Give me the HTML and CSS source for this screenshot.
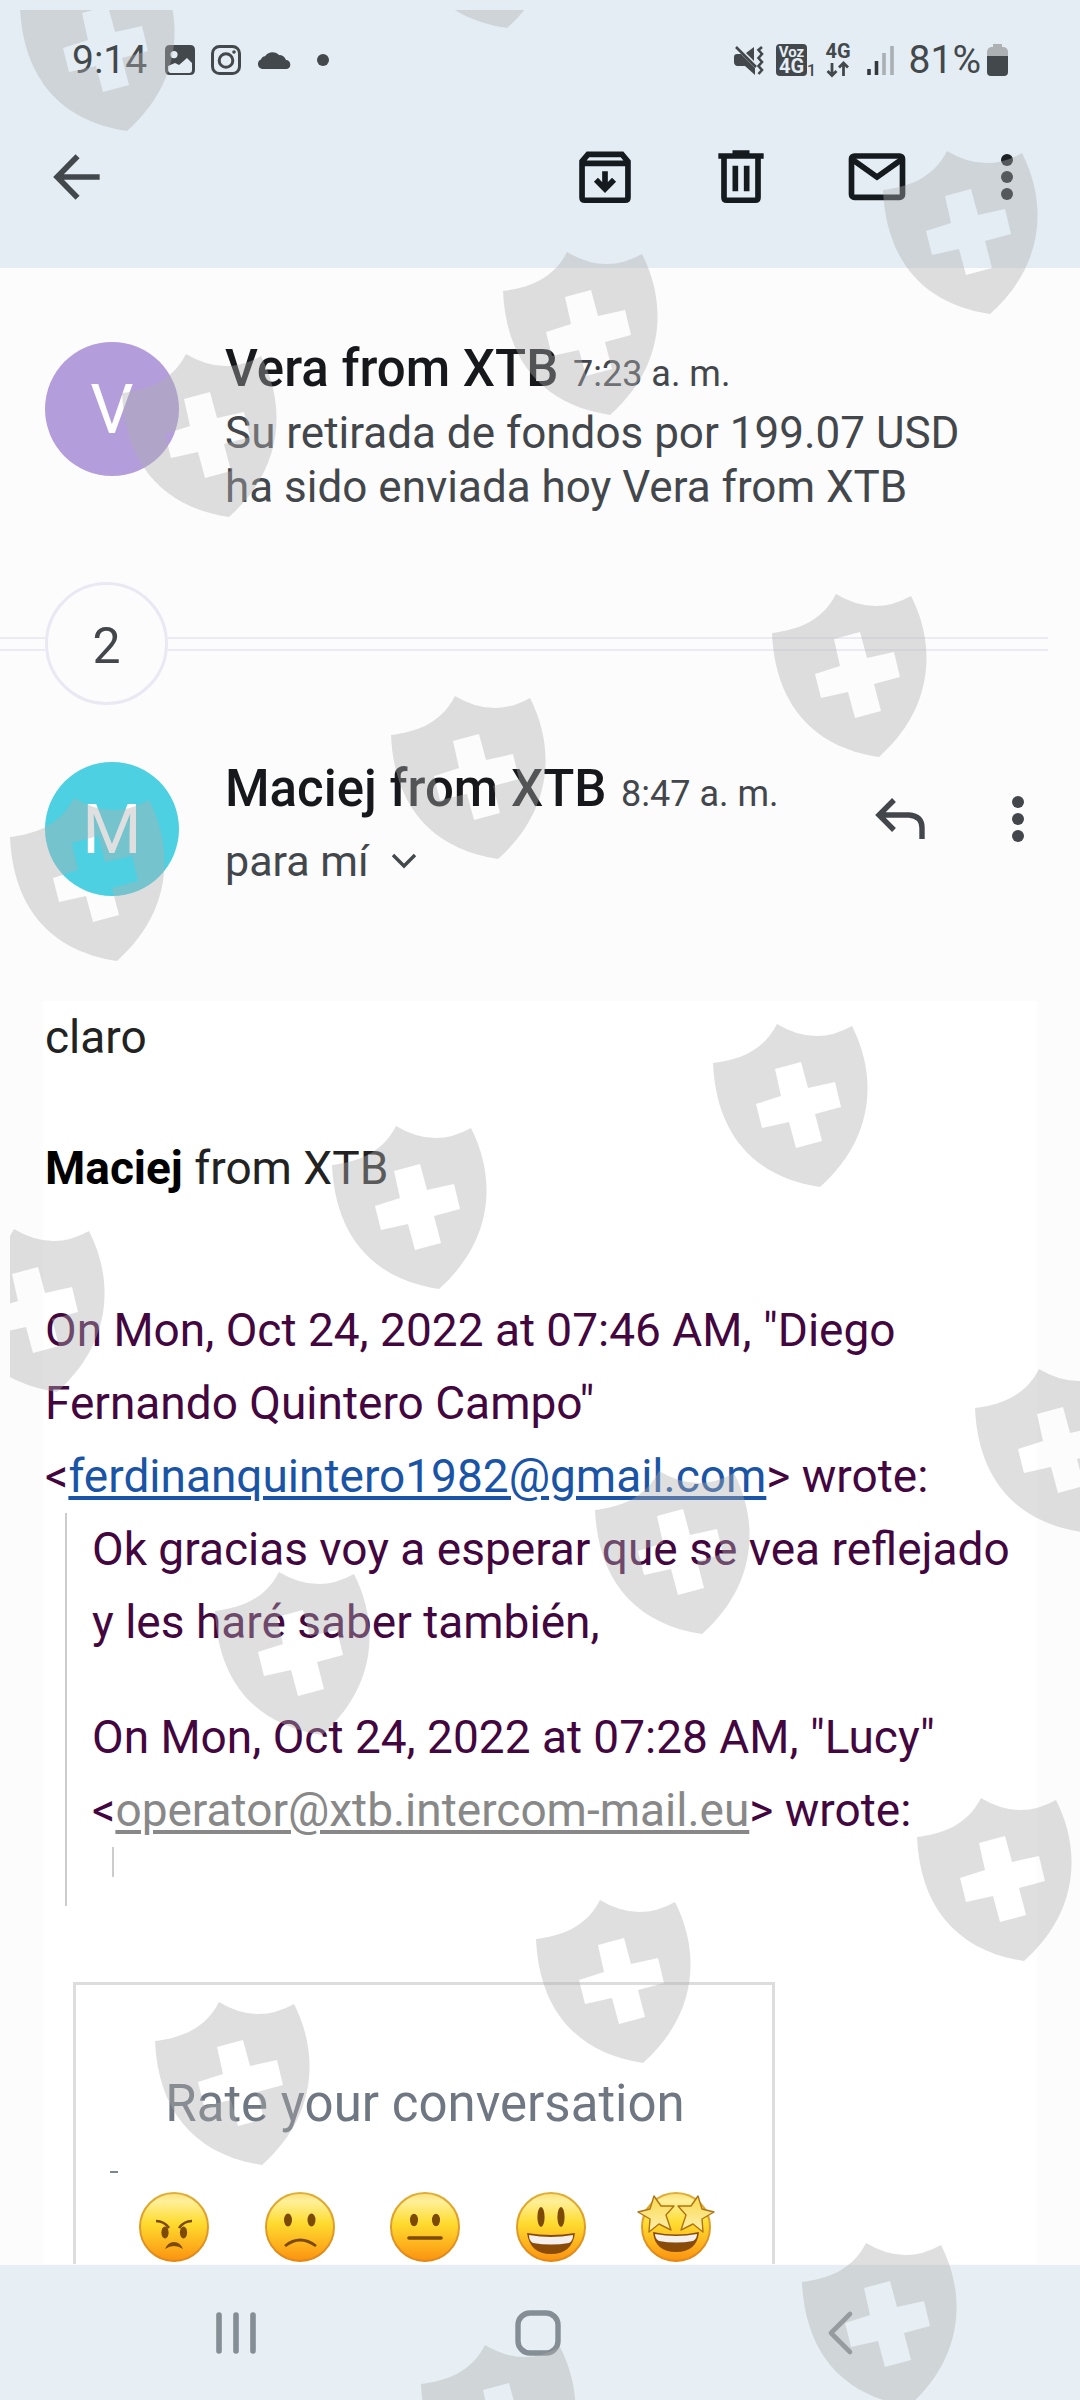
FILE: index.html
```
<!DOCTYPE html>
<html lang="es">
<head>
<meta charset="utf-8">
<meta name="viewport" content="width=device-width, initial-scale=1">
<title>Vera from XTB</title>
<link rel="stylesheet" href="styles.css">
</head>
<body>
<header class="top">
  <div class="status">
    <span class="clock">9:14</span>
    <svg class="ic-picture" width="30" height="30" viewBox="0 0 30 30"><path fill="#43484c" fill-rule="evenodd" d="M5 0H25Q30 0 30 5V25Q30 30 25 30H5Q0 30 0 25V5Q0 0 5 0ZM3 21V24Q3 28 6 28H24Q27 28 27 25V18L22 13L14 20L10 18ZM9 6A3.600 3.600 0 1 0 9 13.200A3.600 3.600 0 1 0 9 6Z"/></svg>
    <svg class="ic-insta" width="30" height="30" viewBox="0 0 30 30" fill="none" stroke="#43484c" stroke-width="3"><rect x="1.500" y="1.500" width="27" height="27" rx="7"/><circle cx="15" cy="15.500" r="6.800"/><circle cx="23" cy="7" r="1.800" fill="#43484c" stroke="none"/></svg>
    <svg class="ic-cloud" width="34" height="20" viewBox="0 0 34 20"><path fill="#43484c" d="M5 19A5 5 0 0 1 4 9.500A4.500 4.500 0 0 1 8 6.200A9 9 0 0 1 22 5Q27 5 29 10A4.600 4.600 0 0 1 30 19Z"/></svg>
    <span class="more-dot"></span>
    <span class="spacer"></span>
    <svg class="ic-mute" width="31" height="32" viewBox="0 0 31 32"><path fill="#43484c" d="M3 10H7L21 24V31L11 22H3Q0 21 0 18V13Q0 10 3 10ZM20 3V17L12 9Z"/><path d="M2 3L22 23M28 3L24.500 6L28 10L24.500 14L28 18L24.500 22L28 26L24.500 30" fill="none" stroke="#43484c" stroke-width="2.600"/></svg>
    <svg class="ic-volte" width="38" height="32" viewBox="0 0 38 32"><rect width="31" height="32" rx="4" fill="#43484c"/><text x="15.500" y="13" text-anchor="middle" class="volte-a">Voz</text><text x="15.500" y="29" text-anchor="middle" class="volte-b">4G</text><text x="31" y="32" class="volte-c">1</text></svg>
    <svg class="ic-data" width="26" height="34" viewBox="0 0 26 34"><text x="13" y="15" text-anchor="middle" class="data-label">4G</text><path d="M7 20V32M2.500 28L7 32.500L11.500 28M18.500 33V20.500M14 24.500L18.500 20L23 24.500" fill="none" stroke="#43484c" stroke-width="2.800"/></svg>
    <svg class="ic-signal" width="27" height="30" viewBox="0 0 27 30"><path d="M2 24V30M9.500 16V30" stroke="#33383c" stroke-width="3.600"/><path d="M17 8V30M25 1V30" stroke="#a9afb4" stroke-width="3.600"/></svg>
    <span class="charge">81%</span>
    <svg class="ic-battery" width="21" height="32" viewBox="0 0 21 32"><path fill="#aeb1b4" d="M6 0H15V3H17Q21 4 21 8V13H0V8Q0 4 4 3H6Z"/><path fill="#43484c" d="M0 12H21V28Q21 32 17 32H4Q0 32 0 28Z"/></svg>
  </div>
  <nav class="toolbar">
    <button class="tool back" aria-label="Atrás"><svg width="68" height="68" viewBox="0 0 24 24" fill="none" stroke="#43484c" stroke-width="2"><path d="M20 12H5.500M12.200 4.700L5 12L12.200 19.300"/></svg></button>
    <span class="spacer"></span>
    <button class="tool" aria-label="Archivar"><svg width="68" height="68" viewBox="0 0 24 24" fill="none" stroke="#141a1e" stroke-width="2"><path d="M3.900 6.500L6 4H18L20.100 6.500V19.200Q20.100 20.200 19.100 20.200H4.900Q3.900 20.200 3.900 19.200ZM4 7.200H20M12 10V15.500M8.800 13L12 16.200L15.200 13"/></svg></button>
    <button class="tool" aria-label="Eliminar"><svg width="68" height="68" viewBox="0 0 24 24" fill="none" stroke="#141a1e" stroke-width="2"><path d="M4 4.600H20M9 3.600H15M6 5V19.200Q6 20.200 7 20.200H17Q18 20.200 18 19.200V5M10 8V17M14 8V17"/></svg></button>
    <button class="tool" aria-label="Marcar como no leído"><svg width="68" height="68" viewBox="0 0 24 24" fill="none" stroke="#141a1e" stroke-width="2"><rect x="3" y="4.600" width="18" height="14.600" rx="1"/><path d="M3 5.600L12 12L21 5.600"/></svg></button>
    <button class="tool last" aria-label="Más opciones"><svg width="12" height="46" viewBox="0 0 12 46" fill="#1b2024"><circle cx="6" cy="6" r="6"/><circle cx="6" cy="23" r="6"/><circle cx="6" cy="40" r="6"/></svg></button>
  </nav>
</header>

<main class="thread">
  <article class="message first">
    <span class="avatar violet">V</span>
    <div class="summary">
      <h2 class="sender">Vera from XTB <time class="time">7:23 a. m.</time></h2>
      <p class="snippet">Su retirada de fondos por 199.07 USD ha sido enviada hoy Vera from XTB</p>
    </div>
  </article>

  <div class="collapsed"><button class="count" aria-label="2 mensajes más">2</button></div>

  <article class="message second">
    <span class="avatar cyan">M</span>
    <div class="summary">
      <h2 class="sender">Maciej from XTB <time class="time">8:47 a. m.</time></h2>
      <button class="recipient">para mí <svg width="26" height="16" viewBox="0 0 26 16" fill="none" stroke="#43484c" stroke-width="3.400"><path d="M2 2L13 13L24 2"/></svg></button>
    </div>
    <div class="actions">
      <button class="action" aria-label="Responder"><svg width="50" height="42" viewBox="0 0 50 42" fill="none" stroke="#43474b" stroke-width="5.400"><path d="M4 17H34Q47 18 47 30V41M19 2L4 17L19 32"/></svg></button>
      <button class="action menu" aria-label="Más"><svg width="12" height="46" viewBox="0 0 12 46" fill="#43474b"><circle cx="6" cy="6" r="6"/><circle cx="6" cy="23" r="6"/><circle cx="6" cy="40" r="6"/></svg></button>
    </div>
  </article>

  <section class="body">
    <p>claro</p>
    <p class="signature"><b>Maciej</b> from XTB</p>
    <div class="quoted">
      <p>On Mon, Oct 24, 2022 at 07:46 AM, "Diego Fernando Quintero Campo" &lt;<a class="mail" href="mailto:ferdinanquintero1982@gmail.com">ferdinanquintero1982@gmail.com</a>&gt; wrote:</p>
      <blockquote class="quote">
        <p>Ok gracias voy a esperar que se vea reflejado y les haré saber también,</p>
        <p class="reply-line">On Mon, Oct 24, 2022 at 07:28 AM, "Lucy" &lt;<a class="mail muted" href="mailto:operator@xtb.intercom-mail.eu">operator@xtb.intercom-mail.eu</a>&gt; wrote:</p>
        <blockquote class="nested"></blockquote>
      </blockquote>
    </div>
    <div class="rating">
      <p class="rating-title">Rate your conversation</p>
      <span class="dash"></span>
      <div class="faces">
        <button class="face" aria-label="Terrible">
          <svg width="70" height="70" viewBox="0 0 70 70">
            <defs>
              <linearGradient id="skin" x1="0" y1="0" x2="0" y2="1"><stop offset="0" stop-color="#fbe07a"/><stop offset=".12" stop-color="#fff09a"/><stop offset=".45" stop-color="#ffdb2e"/><stop offset="1" stop-color="#fb9210"/></linearGradient>
              <linearGradient id="rim" x1="0" y1="0" x2="0" y2="1"><stop offset="0" stop-color="#dfae35"/><stop offset="1" stop-color="#e08717"/></linearGradient>
              <linearGradient id="gold" x1="0" y1="0" x2="0" y2="1"><stop offset="0" stop-color="#f9d94d"/><stop offset="1" stop-color="#fff0b0"/></linearGradient>
              <circle id="head" cx="35" cy="35" r="34" fill="url(#skin)" stroke="url(#rim)" stroke-width="2"/>
            </defs>
            <use href="#head"/>
            <ellipse cx="26" cy="40.500" rx="3.600" ry="6" fill="#7c4a05"/><ellipse cx="44.500" cy="40.500" rx="3.600" ry="6" fill="#7c4a05"/>
            <path d="M17 29Q25 29 30 36M53 29Q45 29 40 36" fill="none" stroke="#7c4a05" stroke-width="2.600"/>
            <path d="M26 57Q29 50 35 50Q41 50 44 57Q35 51 26 57Z" fill="#7c4a05"/>
          </svg></button>
        <button class="face" aria-label="Malo">
          <svg width="70" height="70" viewBox="0 0 70 70"><use href="#head"/>
            <ellipse cx="23" cy="28" rx="4" ry="6.500" fill="#7c4a05"/><ellipse cx="46.500" cy="28" rx="4" ry="6.500" fill="#7c4a05"/>
            <path d="M20 54Q35 42 51 54" fill="none" stroke="#7c4a05" stroke-width="2.800"/></svg></button>
        <button class="face" aria-label="Regular">
          <svg width="70" height="70" viewBox="0 0 70 70"><use href="#head"/>
            <ellipse cx="24" cy="28" rx="4" ry="6.200" fill="#7c4a05"/><ellipse cx="46" cy="28" rx="4" ry="6.200" fill="#7c4a05"/>
            <path d="M19 46H51" fill="none" stroke="#7c4a05" stroke-width="3.600" stroke-linecap="round"/></svg></button>
        <button class="face" aria-label="Bueno">
          <svg width="70" height="70" viewBox="0 0 70 70"><use href="#head"/>
            <ellipse cx="25" cy="25" rx="3.600" ry="10" fill="#7c4a05"/><ellipse cx="45" cy="25" rx="3.600" ry="10" fill="#7c4a05"/>
            <path d="M11 41Q35 45 59 41Q56 62 35 62Q14 62 11 41Z" fill="#8a4b08"/><path d="M13 43Q35 47 57 43Q57 49 53 51Q35 54 17 51Q13 49 13 43Z" fill="#f4f0ee"/></svg></button>
        <button class="face" aria-label="Excelente">
          <svg width="70" height="70" viewBox="0 0 70 70"><use href="#head"/>
            <path d="M12 40Q35 45 58 40Q56 60 35 60Q14 60 12 40Z" fill="#8a4b08"/><path d="M14 42Q35 46 56 42Q56 47 52 49Q35 52 18 49Q14 47 14 42Z" fill="#f4f0ee"/>
            <g fill="url(#gold)" stroke="#b07413" stroke-width="1.400" stroke-linejoin="round"><path d="M13 4L20 14L33 14L25 23L30 38L18 32L8 40L9 27L-3 20L9 17Z"/><path d="M57 4L50 14L37 14L45 23L40 38L52 32L62 40L61 27L73 20L61 17Z"/></g></svg></button>
      </div>
    </div>
  </section>
</main>

<nav class="system">
  <button class="key" aria-label="Recientes"><svg width="40" height="42" viewBox="0 0 40 42" stroke="#858e95" stroke-width="5.600" stroke-linecap="round"><path d="M3 3V39M20 3V39M37 3V39"/></svg></button>
  <button class="key" aria-label="Inicio"><svg width="46" height="46" viewBox="0 0 46 46" fill="none" stroke="#858e95" stroke-width="5.400"><rect x="3" y="3" width="40" height="40" rx="12"/></svg></button>
  <button class="key" aria-label="Volver"><svg width="26" height="44" viewBox="0 0 26 44" fill="none" stroke="#858e95" stroke-width="4.600" stroke-linecap="round" stroke-linejoin="round"><path d="M23 3L4 22L23 41"/></svg></button>
</nav>

<div class="watermark" aria-hidden="true">
  <svg width="100%" height="100%">
    <defs><path id="shield" fill-rule="evenodd" d="M0 0C24 -3 50 -11 64 -39Q102 -16 139 -37C165 14 161 76 107 124C40 114 3 70 0 0ZM62 6L88 -1L95 25L122 19L128 44L102 51L109 78L83 85L76 59L49 65L43 41L68 33Z"/></defs>
    <g fill="#afafaf" fill-opacity=".4">
      <use href="#shield" x="10" y="-3"/>
      <use href="#shield" x="390" y="-106"/>
      <use href="#shield" x="873" y="180"/>
      <use href="#shield" x="493" y="281"/>
      <use href="#shield" x="112" y="383"/>
      <use href="#shield" x="762" y="623"/>
      <use href="#shield" x="381" y="725"/>
      <use href="#shield" x="0" y="827"/>
      <use href="#shield" x="703" y="1053"/>
      <use href="#shield" x="322" y="1155"/>
      <use href="#shield" x="-60" y="1258"/>
      <use href="#shield" x="965" y="1398"/>
      <use href="#shield" x="585" y="1500"/>
      <use href="#shield" x="205" y="1601"/>
      <use href="#shield" x="907" y="1827"/>
      <use href="#shield" x="526" y="1929"/>
      <use href="#shield" x="145" y="2031"/>
      <use href="#shield" x="792" y="2272"/>
      <use href="#shield" x="411" y="2374"/>
    </g>
  </svg>
</div>
</body>
</html>
```
FILE: styles.css
```
*, *::before, *::after { box-sizing: border-box; }

body {
  margin: 0;
  min-height: 100vh;
  display: flex;
  flex-direction: column;
  position: relative;
  background: #fcfcfd;
  color: #43474b;
  font-family: Roboto, sans-serif;
}

h2, p, blockquote { margin: 0; font-weight: 400; }
svg { display: block; flex: none; overflow: visible; }
button {
  border: 0;
  padding: 0;
  background: none;
  color: inherit;
  font: inherit;
  display: flex;
  align-items: center;
  justify-content: center;
}
.spacer { flex: 1; }

/* status bar and toolbar */
.top { background: #e5edf4; }
.status {
  display: flex;
  align-items: center;
  height: 88px;
  padding: 32px 72px 0 72px;
  font-size: 39px;
  line-height: 40px;
  color: #43484c;
}
.ic-picture { margin-left: 18px; }
.ic-insta { margin-left: 16px; }
.ic-cloud { margin-left: 16px; }
.more-dot { width: 12px; height: 12px; margin-left: 26px; border-radius: 50%; background: #43484c; }
.ic-volte { margin-left: 11px; }
.ic-data { margin-left: 11px; }
.ic-signal { margin-left: 16px; }
.charge { margin-left: 15px; }
.ic-battery { margin-left: 6px; }
.volte-a { font-size: 15px; font-weight: 700; fill: #e5edf4; }
.volte-b { font-size: 20px; font-weight: 700; fill: #e5edf4; }
.volte-c { font-size: 16px; font-weight: 500; fill: #43484c; }
.data-label { font-size: 20px; font-weight: 700; fill: #43484c; }

.toolbar { display: flex; height: 180px; padding: 0 11px 2px 43px; }
.tool { width: 136px; }
.tool.back { width: 68px; }
.tool.last { width: 124px; }

/* message headers */
.thread { flex: 1; }
.message { display: flex; padding: 0 45px; }
.first { padding-top: 71px; }
.second { padding-top: 54px; }
.avatar {
  flex: none;
  width: 134px;
  height: 134px;
  margin: 3px 46px 0 0;
  border-radius: 50%;
  color: #fff;
  font-size: 68px;
  line-height: 136px;
  text-align: center;
}
.violet { background: #b39ddb; }
.cyan { background: #4dd0e1; }
.summary { flex: 1; }
.sender { color: #17181c; font-size: 51px; line-height: 60px; font-weight: 500; white-space: nowrap; }
.time { margin-left: 2px; color: #43474b; font-size: 36px; line-height: 36px; font-weight: 400; }
.snippet { margin-top: 7px; max-width: 760px; font-size: 44px; line-height: 54px; }
.recipient { margin-top: 15px; gap: 22px; font-size: 43px; line-height: 54px; }
.actions { display: flex; align-items: center; gap: 76px; height: 120px; }
.menu { width: 34px; }

/* collapsed messages separator */
.collapsed { display: flex; align-items: center; margin: 68px 32px 0 0; }
.collapsed::before, .collapsed::after {
  content: "";
  width: 45px;
  height: 14px;
  border: solid #ecebf4;
  border-width: 2px 0;
}
.collapsed::after { flex: 1; }
.count {
  width: 123px;
  height: 123px;
  padding-top: 5px;
  border: 3px solid #eae8f2;
  border-radius: 50%;
  font-size: 50px;
}

/* message body */
.body {
  margin: 105px 43px 0;
  padding: 0 0 0 2px;
  background: #fff;
  color: #222;
  font-size: 46px;
  line-height: 73px;
}
.signature { margin-top: 58px; }
.signature b { color: #000; }
.quoted { margin-top: 89px; color: #43063f; }
.mail { color: #1a54a6; text-decoration-thickness: 4px; text-underline-offset: 4px; }
.mail.muted { color: #888; }
.quote { margin-left: 20px; padding: 0 0 29px 25px; border-left: 2px solid #ccc; }
.reply-line { margin-top: 42px; }
.nested { height: 30px; margin-left: 20px; border-left: 2px solid #ccc; }

.rating {
  width: 702px;
  max-width: 100%;
  margin: 76px 0 0 28px;
  padding: 89px 61px 0 63px;
  border: 3px solid #ddd;
  border-bottom: 0;
}
.rating-title { color: #6f7782; font-size: 51px; line-height: 60px; text-align: center; }
.dash { display: block; width: 8px; height: 2px; margin: 37px 0 19px -29px; background: #7d8590; }
.faces { display: flex; justify-content: space-between; height: 72px; }
.face { width: 70px; height: 70px; }

/* system navigation */
.system { display: flex; justify-content: center; height: 135px; padding: 0 89px 0 85px; background: #e7eef4; }
.key { flex: 1; }

/* shield pattern over the whole screen */
.watermark { position: absolute; inset: 10px 0 0 10px; overflow: hidden; pointer-events: none; }
.watermark svg { overflow: hidden; }
```
